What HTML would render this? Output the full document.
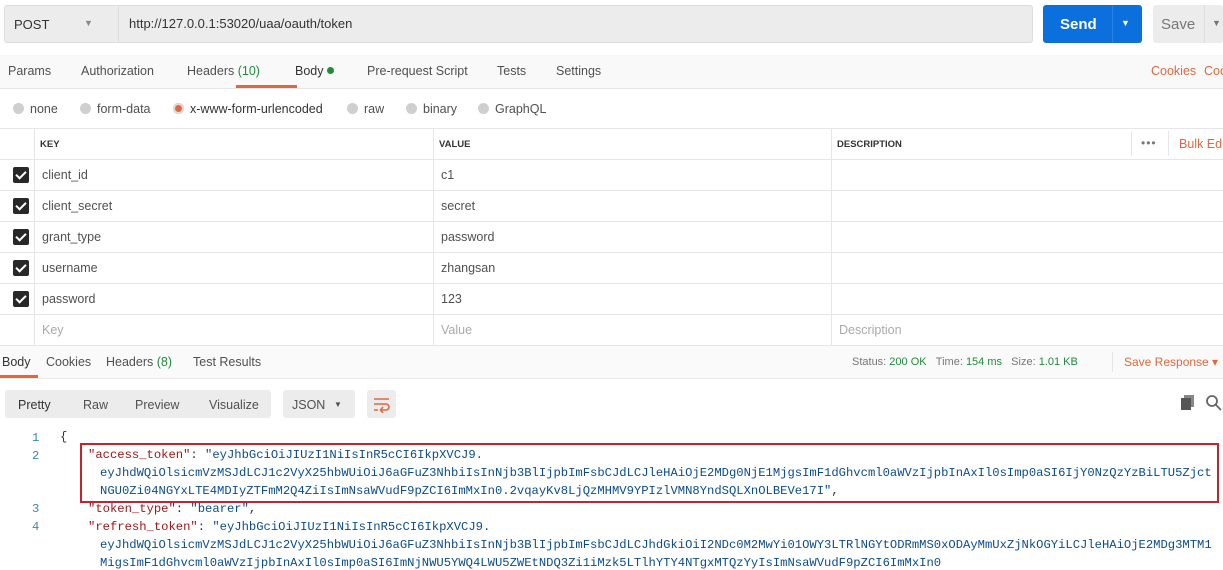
<!DOCTYPE html>
<html><head><meta charset="utf-8"><style>
*{box-sizing:border-box;margin:0;padding:0}
body{width:1223px;height:564px;overflow:hidden;background:#fff;font-family:"Liberation Sans",sans-serif;font-size:12px;color:#505050;position:relative}
.a{position:absolute;white-space:nowrap}
.mono{font-family:"Liberation Mono",monospace;font-size:12.2px}
.cb{position:absolute;left:13px;width:16px;height:16px;background:#282828;border-radius:2px}
.cb:after{content:"";position:absolute;left:5px;top:2px;width:4px;height:8px;border:solid #fff;border-width:0 2px 2px 0;transform:rotate(45deg)}
.rad{display:inline-block;width:11px;height:11px;border-radius:50%;background:#cfcfcf;vertical-align:-1px;margin-right:6px}
.hl{position:absolute;height:1px;background:#e6e6e6}
.vl{position:absolute;width:1px;background:#e6e6e6}
.s{color:#0b4c8c}.k{color:#a31515}.p{color:#333}
</style></head><body>
<!-- top bar -->
<div class="a" style="left:4px;top:5px;width:1029px;height:38px;background:#ececec;border:1px solid #dcdcdc;border-radius:3px"></div>
<div class="a" style="left:118px;top:5px;width:1px;height:38px;background:#dcdcdc"></div>
<div class="a" style="left:14px;top:17px;font-size:13px;color:#333">POST</div>
<div class="a" style="left:84px;top:18px;font-size:9px;color:#888">▼</div>
<div class="a" style="left:129px;top:16px;font-size:13px;color:#333">http://127.0.0.1:53020/uaa/oauth/token</div>
<div class="a" style="left:1043px;top:5px;width:99px;height:38px;background:#0b6fde;border-radius:3px"></div>
<div class="a" style="left:1060px;top:16px;font-size:15px;font-weight:bold;color:#fff">Send</div>
<div class="a" style="left:1112px;top:5px;width:1px;height:38px;background:#2a80e6"></div>
<div class="a" style="left:1121px;top:18px;font-size:9px;color:#fff">▼</div>
<div class="a" style="left:1153px;top:5px;width:70px;height:38px;background:#ececec;border-radius:3px"></div>
<div class="a" style="left:1161px;top:16px;font-size:15px;color:#777">Save</div>
<div class="a" style="left:1204px;top:5px;width:1px;height:38px;background:#ddd"></div>
<div class="a" style="left:1212px;top:18px;font-size:9px;color:#777">▼</div>
<!-- tabs -->
<div class="a" style="left:0;top:55px;width:1223px;height:33px;background:#f9f9f9"></div>
<div class="hl" style="left:0;top:88px;width:1223px"></div>
<div class="a" style="left:8px;top:64px;font-size:12.5px">Params</div>
<div class="a" style="left:81px;top:64px;font-size:12.5px">Authorization</div>
<div class="a" style="left:187px;top:64px;font-size:12.5px">Headers <span style="color:#1f8c3a">(10)</span></div>
<div class="a" style="left:295px;top:64px;font-size:12.5px;color:#333">Body <span style="display:inline-block;width:7px;height:7px;border-radius:50%;background:#1f8c3a;vertical-align:1px"></span></div>
<div class="a" style="left:236px;top:85px;width:61px;height:3px;background:#e0683f"></div>
<div class="a" style="left:367px;top:64px;font-size:12.5px">Pre-request Script</div>
<div class="a" style="left:497px;top:64px;font-size:12.5px">Tests</div>
<div class="a" style="left:556px;top:64px;font-size:12.5px">Settings</div>
<div class="a" style="left:1151px;top:64px;font-size:12.5px;color:#e0683f">Cookies</div>
<div class="a" style="left:1204px;top:64px;font-size:12.5px;color:#e0683f">Coo</div>
<!-- radios -->
<div class="a" style="left:13px;top:102px;font-size:12.5px"><span class="rad"></span>none</div>
<div class="a" style="left:80px;top:102px;font-size:12.5px"><span class="rad"></span>form-data</div>
<div class="a" style="left:173px;top:102px;font-size:12.5px;color:#333"><span class="rad" style="background:#e0683f;box-shadow:inset 0 0 0 2px #ddd"></span>x-www-form-urlencoded</div>
<div class="a" style="left:347px;top:102px;font-size:12.5px"><span class="rad"></span>raw</div>
<div class="a" style="left:406px;top:102px;font-size:12.5px"><span class="rad"></span>binary</div>
<div class="a" style="left:478px;top:102px;font-size:12.5px"><span class="rad"></span>GraphQL</div>
<!-- table -->
<div class="hl" style="left:0;top:128px;width:1223px"></div>
<div class="hl" style="left:0;top:159px;width:1223px"></div>
<div class="hl" style="left:0;top:190px;width:1223px"></div>
<div class="hl" style="left:0;top:221px;width:1223px"></div>
<div class="hl" style="left:0;top:252px;width:1223px"></div>
<div class="hl" style="left:0;top:283px;width:1223px"></div>
<div class="hl" style="left:0;top:314px;width:1223px"></div>
<div class="hl" style="left:0;top:345px;width:1223px"></div>
<div class="vl" style="left:34px;top:128px;height:217px"></div>
<div class="vl" style="left:433px;top:128px;height:217px"></div>
<div class="vl" style="left:831px;top:128px;height:217px"></div>
<div class="vl" style="left:1131px;top:131px;height:25px"></div>
<div class="vl" style="left:1168px;top:131px;height:25px"></div>
<div class="a" style="left:40px;top:139px;font-size:9.5px;font-weight:bold;color:#333">KEY</div>
<div class="a" style="left:439px;top:139px;font-size:9.5px;font-weight:bold;color:#333">VALUE</div>
<div class="a" style="left:837px;top:139px;font-size:9.5px;font-weight:bold;color:#333">DESCRIPTION</div>
<div class="a" style="left:1141px;top:136px;font-size:12px;color:#777;letter-spacing:1px">•••</div>
<div class="a" style="left:1179px;top:137px;font-size:12.5px;color:#e0683f">Bulk Edi</div>
<div class="cb" style="top:167px"></div><div class="a" style="left:42px;top:168px;font-size:12.5px">client_id</div><div class="a" style="left:441px;top:168px;font-size:12.5px">c1</div>
<div class="cb" style="top:198px"></div><div class="a" style="left:42px;top:199px;font-size:12.5px">client_secret</div><div class="a" style="left:441px;top:199px;font-size:12.5px">secret</div>
<div class="cb" style="top:229px"></div><div class="a" style="left:42px;top:230px;font-size:12.5px">grant_type</div><div class="a" style="left:441px;top:230px;font-size:12.5px">password</div>
<div class="cb" style="top:260px"></div><div class="a" style="left:42px;top:261px;font-size:12.5px">username</div><div class="a" style="left:441px;top:261px;font-size:12.5px">zhangsan</div>
<div class="cb" style="top:291px"></div><div class="a" style="left:42px;top:292px;font-size:12.5px">password</div><div class="a" style="left:441px;top:292px;font-size:12.5px">123</div>
<div class="a" style="left:42px;top:323px;font-size:12.5px;color:#aaa">Key</div><div class="a" style="left:441px;top:323px;font-size:12.5px;color:#aaa">Value</div><div class="a" style="left:839px;top:323px;font-size:12.5px;color:#aaa">Description</div>
<!-- response tabs -->
<div class="a" style="left:0;top:346px;width:1223px;height:32px;background:#fafafa"></div>
<div class="hl" style="left:0;top:378px;width:1223px;background:#e8e8e8"></div>
<div class="a" style="left:2px;top:355px;font-size:12.5px;color:#333">Body</div>
<div class="a" style="left:0;top:375px;width:38px;height:3px;background:#e0683f"></div>
<div class="a" style="left:46px;top:355px;font-size:12.5px">Cookies</div>
<div class="a" style="left:106px;top:355px;font-size:12.5px">Headers <span style="color:#1f8c3a">(8)</span></div>
<div class="a" style="left:193px;top:355px;font-size:12.5px">Test Results</div>
<div class="a" style="left:852px;top:356px;font-size:11px;color:#777">Status: <span style="color:#1f8c3a">200 OK</span>&nbsp;&nbsp;&nbsp;Time: <span style="color:#1f8c3a">154 ms</span>&nbsp;&nbsp;&nbsp;Size: <span style="color:#1f8c3a">1.01 KB</span></div>
<div class="vl" style="left:1112px;top:352px;height:20px"></div>
<div class="a" style="left:1124px;top:355px;font-size:12px;color:#e0683f">Save Response ▾</div>
<!-- buttons -->
<div class="a" style="left:5px;top:390px;width:266px;height:28px;background:#ececec;border-radius:3px"></div>
<div class="a" style="left:18px;top:398px;font-size:12.5px;color:#333">Pretty</div>
<div class="a" style="left:83px;top:398px;font-size:12.5px">Raw</div>
<div class="a" style="left:135px;top:398px;font-size:12.5px">Preview</div>
<div class="a" style="left:209px;top:398px;font-size:12.5px">Visualize</div>
<div class="a" style="left:283px;top:390px;width:72px;height:28px;background:#ececec;border-radius:3px"></div>
<div class="a" style="left:292px;top:398px;font-size:12.5px">JSON</div>
<div class="a" style="left:334px;top:400px;font-size:8px">▼</div>
<div class="a" style="left:367px;top:390px;width:29px;height:28px;background:#ececec;border-radius:3px"></div>
<svg class="a" style="left:372px;top:395px" width="19" height="18" viewBox="0 0 19 18" fill="none" stroke="#e0683f" stroke-width="1.6"><path d="M2 4h15M2 9h12a3 3 0 0 1 0 6h-5M11 12l-2.5 3 2.5 3M2 15h4"/></svg>
<div class="a" style="left:1184px;top:395px;width:10px;height:12px;background:#888"></div>
<div class="a" style="left:1181px;top:398px;width:10px;height:12px;background:#555"></div>
<svg class="a" style="left:1205px;top:394px" width="18" height="18" viewBox="0 0 18 18" fill="none" stroke="#666" stroke-width="1.8"><circle cx="7" cy="7" r="5"/><path d="M11 11l5 5"/></svg>
<!-- code -->
<div class="mono a" style="left:32px;top:430px;line-height:17.8px;color:#3a8aa6">1<br>2<br><br><br>3<br>4</div>
<div class="mono a p" style="left:60px;top:430px">{</div>
<div class="mono a" style="left:88px;top:448px"><span class="k">"access_token"</span><span class="p">: </span><span class="s">"eyJhbGciOiJIUzI1NiIsInR5cCI6IkpXVCJ9.</span></div>
<div class="mono a s" style="left:100px;top:466px">eyJhdWQiOlsicmVzMSJdLCJ1c2VyX25hbWUiOiJ6aGFuZ3NhbiIsInNjb3BlIjpbImFsbCJdLCJleHAiOjE2MDg0NjE1MjgsImF1dGhvcml0aWVzIjpbInAxIl0sImp0aSI6IjY0NzQzYzBiLTU5Zjct</div>
<div class="mono a s" style="left:100px;top:484px">NGU0Zi04NGYxLTE4MDIyZTFmM2Q4ZiIsImNsaWVudF9pZCI6ImMxIn0.2vqayKv8LjQzMHMV9YPIzlVMN8YndSQLXnOLBEVe17I"<span class="p">,</span></div>
<div class="mono a" style="left:88px;top:502px"><span class="k">"token_type"</span><span class="p">: </span><span class="s">"bearer"</span><span class="p">,</span></div>
<div class="mono a" style="left:88px;top:520px"><span class="k">"refresh_token"</span><span class="p">: </span><span class="s">"eyJhbGciOiJIUzI1NiIsInR5cCI6IkpXVCJ9.</span></div>
<div class="mono a s" style="left:100px;top:538px">eyJhdWQiOlsicmVzMSJdLCJ1c2VyX25hbWUiOiJ6aGFuZ3NhbiIsInNjb3BlIjpbImFsbCJdLCJhdGkiOiI2NDc0M2MwYi01OWY3LTRlNGYtODRmMS0xODAyMmUxZjNkOGYiLCJleHAiOjE2MDg3MTM1</div>
<div class="mono a s" style="left:100px;top:556px">MigsImF1dGhvcml0aWVzIjpbInAxIl0sImp0aSI6ImNjNWU5YWQ4LWU5ZWEtNDQ3Zi1iMzk5LTlhYTY4NTgxMTQzYyIsImNsaWVudF9pZCI6ImMxIn0</div>
<div class="a" style="left:80px;top:443px;width:1139px;height:60px;border:2px solid #c8232c"></div>
</body></html>
